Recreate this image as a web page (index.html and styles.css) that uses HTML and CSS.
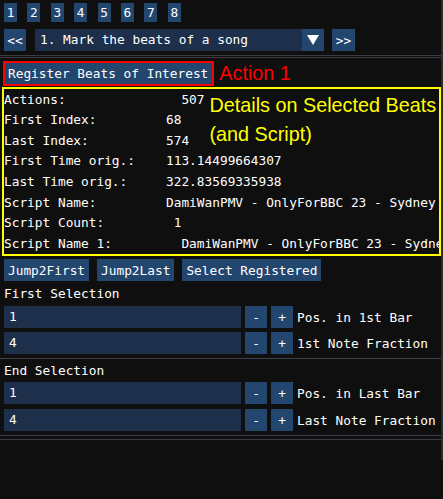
FILE: index.html
```html
<!DOCTYPE html>
<html lang="en">
<head>
<meta charset="utf-8">
<title>Beat Marker</title>
<link rel="stylesheet" href="styles.css">
</head>
<body>
<div class="window">
  <div class="tabs">
    <div class="btn tab">1</div>
    <div class="btn tab">2</div>
    <div class="btn tab">3</div>
    <div class="btn tab">4</div>
    <div class="btn tab">5</div>
    <div class="btn tab">6</div>
    <div class="btn tab">7</div>
    <div class="btn tab">8</div>
  </div>

  <div class="nav">
    <div class="btn nav-prev">&lt;&lt;</div>
    <div class="combo">
      <span class="combo-text">1. Mark the beats of a song</span>
      <span class="combo-arrow">
        <svg width="12" height="10" viewBox="0 0 12 10"><polygon points="0,0 12,0 6,10" fill="#ffffff"/></svg>
      </span>
    </div>
    <div class="btn nav-next">&gt;&gt;</div>
  </div>

  <div class="sep-double"></div>

  <div class="action-row">
    <div class="hl-red"><div class="btn register">Register Beats of Interest</div></div>
    <span class="note note-red">Action 1</span>
  </div>

  <div class="details">
    <div class="stats">
      <span class="k">Actions:</span><span class="v">  507</span>
      <span class="k">First Index:</span><span class="v">68</span>
      <span class="k">Last Index:</span><span class="v">574</span>
      <span class="k">First Time orig.:</span><span class="v">113.14499664307</span>
      <span class="k">Last Time orig.:</span><span class="v">322.83569335938</span>
      <span class="k">Script Name:</span><span class="v">DamiWanPMV - OnlyForBBC 23 - Sydney</span>
      <span class="k">Script Count:</span><span class="v"> 1</span>
      <span class="k">Script Name 1:</span><span class="v">  DamiWanPMV - OnlyForBBC 23 - Sydney</span>
    </div>
    <p class="note note-yellow">Details on Selected Beats<br>(and Script)</p>
  </div>

  <div class="jump-row">
    <div class="btn jump">Jump2First</div>
    <div class="btn jump">Jump2Last</div>
    <div class="btn jump">Select Registered</div>
  </div>

  <div class="section-title">First Selection</div>
  <div class="field-row">
    <div class="field">1</div>
    <div class="btn step">-</div>
    <div class="btn step">+</div>
    <span class="field-label">Pos. in 1st Bar</span>
  </div>
  <div class="field-row next">
    <div class="field">4</div>
    <div class="btn step">-</div>
    <div class="btn step">+</div>
    <span class="field-label">1st Note Fraction</span>
  </div>

  <div class="sep"></div>

  <div class="section-title end">End Selection</div>
  <div class="field-row end-first">
    <div class="field">1</div>
    <div class="btn step">-</div>
    <div class="btn step">+</div>
    <span class="field-label">Pos. in Last Bar</span>
  </div>
  <div class="field-row end-next">
    <div class="field">4</div>
    <div class="btn step">-</div>
    <div class="btn step">+</div>
    <span class="field-label">Last Note Fraction</span>
  </div>

  <div class="sep-double bottom"></div>
</div>
</body>
</html>
```

FILE: styles.css
```css
html, body {
  margin: 0;
  padding: 0;
  background: #0f0f0f;
}

body {
  width: 443px;
  height: 499px;
  overflow: hidden;
  font-family: "DejaVu Sans Mono", "Liberation Mono", monospace;
  font-size: 12.8px;
  color: #ffffff;
}

.window {
  width: 441px;
  height: 460px;
  border-right: 2px solid #2b2b2e;
}

/* generic push button */
.btn {
  background: #23466f;
  color: #ffffff;
  display: flex;
  align-items: center;
  justify-content: center;
  white-space: pre;
}

/* page number strip */
.tabs {
  display: flex;
  gap: 10.4px;
  padding: 3px 0 0 4px;
}

.tab {
  width: 13px;
  height: 19px;
}

/* prev / combo / next */
.nav {
  display: flex;
  height: 22px;
  margin-top: 7px;
  padding-left: 4px;
}

.nav-prev {
  width: 22px;
}

.nav-next {
  width: 23px;
}

.combo {
  width: 289px;
  display: flex;
  background: #1d2f4a;
  margin: 0 8px 0 9px;
}

.combo-text {
  flex: 1;
  padding-left: 5px;
  line-height: 22px;
  white-space: nowrap;
  overflow: hidden;
}

.combo-arrow {
  width: 22px;
  background: #23466f;
  display: flex;
  align-items: center;
  justify-content: center;
}

/* separators */
.sep-double {
  height: 1px;
  margin-top: 4px;
  border-top: 1px solid #3a3a42;
  border-bottom: 1px solid #3a3a42;
}

.sep-double.bottom {
  height: 3px;
}

.sep {
  height: 1px;
  margin-top: 4px;
  background: #3f3f48;
}

/* register action */
.action-row {
  display: flex;
  align-items: center;
  gap: 5px;
  margin-top: 3px;
  padding-left: 3px;
}

.hl-red {
  border: 2px solid #ff0000;
}

.register {
  height: 21px;
  padding: 0 4px 0 3px;
}

.note {
  margin: 0;
  font-family: "Liberation Sans", Arial, sans-serif;
  font-size: 19.8px;
  white-space: nowrap;
}

.note-red {
  color: #ff0000;
}

/* details panel */
.details {
  position: relative;
  box-sizing: border-box;
  width: 439px;
  height: 169px;
  margin: 1px 0 0 2px;
  border: 2px solid #ffff00;
  overflow: hidden;
}

.stats {
  display: grid;
  grid-template-columns: 162px auto;
  padding-top: 0.7px;
  line-height: 20.6px;
  white-space: pre;
}

.note-yellow {
  position: absolute;
  left: 205.5px;
  top: 1.5px;
  line-height: 29px;
  color: #ffff00;
}

/* jump buttons */
.jump-row {
  display: flex;
  gap: 8px;
  height: 22px;
  margin-top: 3px;
  padding-left: 4px;
}

.jump {
  padding: 0 4px;
}

/* selection inputs */
.section-title {
  line-height: 20px;
  margin-top: 3px;
  padding-left: 4px;
}

.section-title.end {
  margin-top: 2px;
}

.field-row {
  display: flex;
  align-items: center;
  gap: 4px;
  height: 22px;
  margin-top: 2px;
  padding-left: 4px;
}

.field-row.next {
  margin-top: 4px;
}

.field-row.end-first {
  margin-top: 1px;
}

.field-row.end-next {
  margin-top: 5px;
}

.field {
  box-sizing: border-box;
  width: 237px;
  height: 22px;
  line-height: 22px;
  padding-left: 5px;
  background: #1d2f4a;
}

.step {
  width: 22px;
  height: 22px;
}

.field-label {
  white-space: nowrap;
}
```
